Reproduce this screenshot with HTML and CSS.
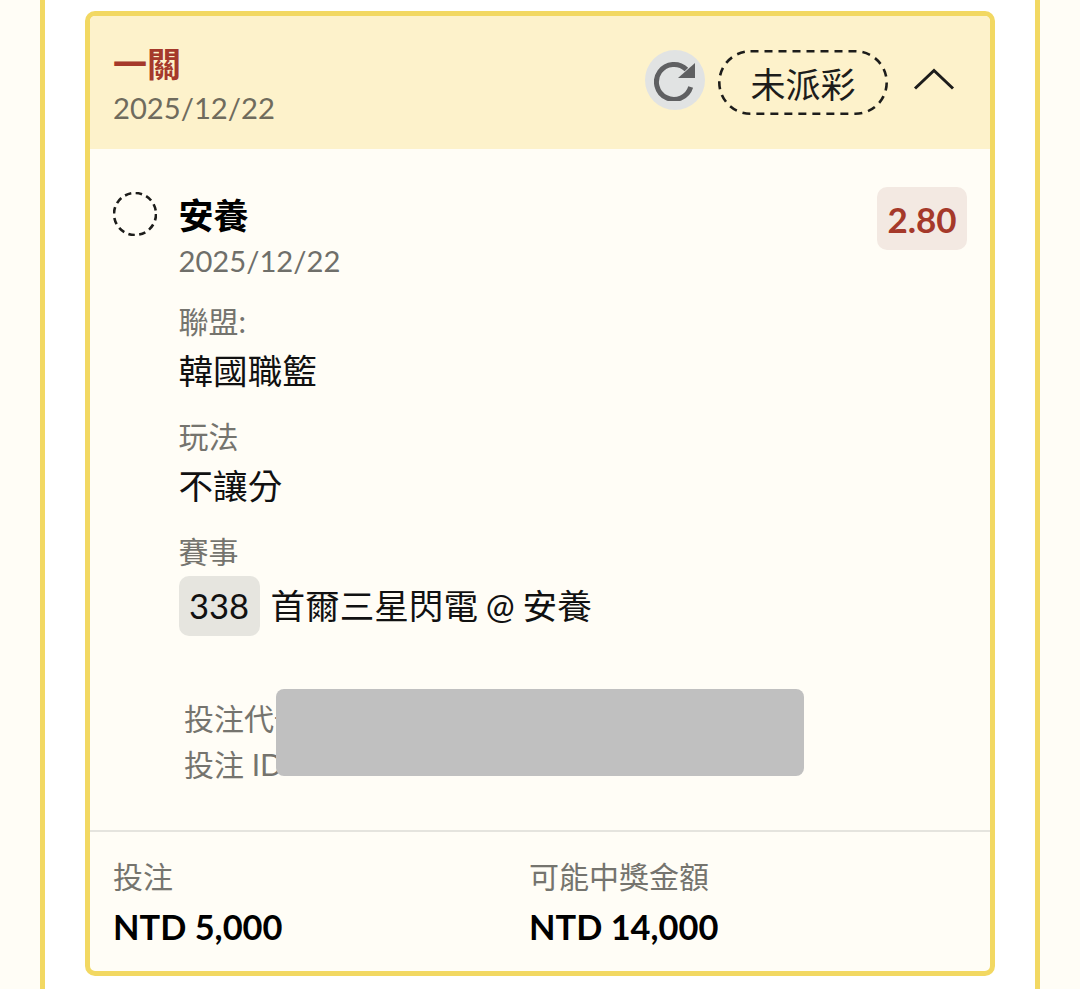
FILE: index.html
```html
<!DOCTYPE html>
<html lang="zh-Hant">
	<head>
		<meta charset="utf-8">
		<title></title>
		<link rel="stylesheet" href="styles.css">
	</head>
	<body>
		<div class="frame">
			<section class="card">
				<header class="card-head">
					<div class="head-info">
						<h2 class="head-title">一關</h2>
						<p class="head-date">2025/12/22</p>
					</div>
					<div class="head-actions">
						<span class="refresh">
							<svg width="42" height="42" viewBox="0 0 42 42">
								<path d="M32.4 10.6A17.5 17.5 0 1 0 36.7 28" fill="none" stroke="#5f6062" stroke-width="5"/>
								<path d="M41 4V19H24Z" fill="#5f6062"/>
							</svg>
						</span>
						<span class="status">
							<svg class="status-line" width="170" height="65" viewBox="0 0 170 65">
								<rect x="1.3" y="1.3" width="167.4" height="62.4" rx="31.2" fill="none" stroke="#1d1d1b" stroke-width="2.6" stroke-dasharray="8 6"/>
							</svg>
							未派彩
						</span>
						<svg class="chevron" width="42" height="24" viewBox="0 0 42 24">
							<path d="M2 21.5L21 3.5 40 21.5" fill="none" stroke="#1d1d1b" stroke-width="3"/>
						</svg>
					</div>
				</header>

				<div class="card-body">
					<div class="pick">
						<svg class="radio" width="44" height="44" viewBox="0 0 44 44">
							<circle cx="22" cy="22" r="21" fill="none" stroke="#1d1d1b" stroke-width="2.6" stroke-dasharray="6.5 4.5"/>
						</svg>
						<div class="pick-main">
							<h3 class="pick-name">安養</h3>
							<p class="pick-date">2025/12/22</p>
						</div>
						<span class="odds">2.80</span>
					</div>

					<dl class="fields">
						<dt>聯盟:</dt>
						<dd>韓國職籃</dd>
						<dt>玩法</dt>
						<dd>不讓分</dd>
						<dt>賽事</dt>
						<dd class="match"><span class="match-no">338</span>首爾三星閃電 @ 安養</dd>
					</dl>

					<div class="codes">
						<p>投注代號</p>
						<p>投注 ID</p>
						<div class="redact"></div>
					</div>
				</div>

				<footer class="card-foot">
					<div class="foot-col">
						<p class="foot-label">投注</p>
						<p class="foot-value">NTD 5,000</p>
					</div>
					<div class="foot-col">
						<p class="foot-label">可能中獎金額</p>
						<p class="foot-value">NTD 14,000</p>
					</div>
				</footer>
			</section>
		</div>
	</body>
</html>
```

FILE: styles.css
```css
*{margin: 0; padding: 0; box-sizing: border-box;}
html, body{height: 100%; overflow: hidden;}
body{background: #fffdf6; font-family: "Lato", "Noto Sans CJK TC", sans-serif; color: #000;}
.frame{margin: 0 40px; height: 989px; padding: 11px 40px 0; background: #fff; border-left: 5px solid #f2d862; border-right: 5px solid #f2d862;}

.card{height: 965px; background: #fffdf6; border: 5px solid #f2d862; border-radius: 10px; overflow: hidden;}

.card-head{height: 133px; padding: 0 35px 0 23px; background: #fdf2cb; display: flex; justify-content: space-between; align-items: center;}
.head-info{padding-top: 6px;}
.head-title{font-size: 34px; line-height: 45px; font-weight: 700; color: #a5392a;}
.head-date{font-size: 29.2px; line-height: 44px; color: #6f6b5d;}
.head-actions{display: flex; align-items: center;}
.refresh{width: 60px; height: 60px; margin-bottom: 5px; border-radius: 50%; background: #e1e3e3; display: flex; align-items: center; justify-content: center;}
.status{position: relative; margin-left: 13px; width: 170px; height: 65px; font-size: 35px; color: #1d1d1b; display: flex; align-items: center; justify-content: center;}
.status-line{position: absolute; left: 0; top: 0;}
.chevron{margin-left: 25px; margin-bottom: 8px;}

.card-body{padding: 38px 23px 0; height: 683px; border-bottom: 2px solid #e5e4de;}
.pick{display: flex; align-items: flex-start;}
.radio{margin-top: 5px; flex: none;}
.pick-main{margin-left: 21.5px; flex: 1;}
.pick-name{font-size: 35px; line-height: 47px; margin-top: 5px; font-weight: 700;}
.pick-date{font-size: 29.2px; line-height: 44px; color: #6f6f6a;}
.odds{width: 90px; height: 63px; background: #f3e9e2; border-radius: 10px; color: #a5392a; font-size: 35px; font-weight: 700; display: flex; align-items: center; justify-content: center;}

.fields{margin: 18px 0 0 65.5px;}
.fields dt{font-size: 30px; line-height: 40px; color: #75746e;}
.fields dd{font-size: 34.6px; line-height: 50px; margin: 5px 0 20px; color: #111;}
.fields .match{display: flex; align-items: center; margin: 5px 0 0; word-spacing: -1px;}
.match-no{width: 81px; height: 60px; margin-right: 11px; background: #e6e5df; border-radius: 10px; display: flex; align-items: center; justify-content: center;}

.codes{position: relative; margin: 53px 0 0 71px; padding-top: 6px; font-size: 30px; line-height: 46px; color: #75746e;}
.redact{position: absolute; left: 92px; top: 0; width: 528px; height: 87px; background: #c0c0c0; border-radius: 8px;}

.card-foot{padding: 22px 23px 0; display: flex;}
.foot-col{width: 416px;}
.foot-label{font-size: 30px; line-height: 44px; color: #75746e;}
.foot-value{font-size: 34.4px; line-height: 50px; margin-top: 4px; font-weight: 700;}
```
